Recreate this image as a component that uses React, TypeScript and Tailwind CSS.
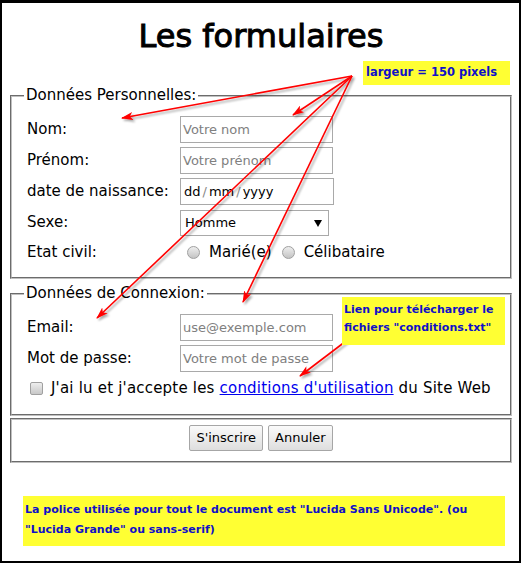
import React from 'react'

const font = "font-['DejaVu_Sans',sans-serif]"
const note = "font-['Comic_Sans_MS','DejaVu_Sans',sans-serif] font-bold text-[#1010c8]"

function TextBox({ placeholder }: { placeholder: string }) {
  return (
    <div className="w-[153px] h-[27px] border border-[#a9a9a9] bg-white px-[2px] flex items-center text-[13px] text-[#808080]">
      {placeholder}
    </div>
  )
}

function Radio() {
  return <span className="inline-block w-[13px] h-[13px] rounded-full border border-[#a0a0a0] bg-gradient-to-b from-[#eeeeee] to-[#c4c4c4]" />
}

function Row({ label, children }: { label: string; children: React.ReactNode }) {
  return (
    <>
      <div className="text-[15px] leading-[19px]">{label}</div>
      <div className="flex items-center">{children}</div>
    </>
  )
}

function Arrows() {
  const o = { x: 352, y: 76 }
  const tips = [
    [122, 118],
    [293, 115],
    [97, 318],
    [243, 302],
  ]
  return (
    <svg className="absolute left-0 top-0 pointer-events-none" width={521} height={563}>
      <defs>
        <marker id="head" markerUnits="userSpaceOnUse" markerWidth={12} markerHeight={8} refX={11} refY={4} orient="auto">
          <path d="M0,0 L12,4 L0,8 L3,4 z" fill="#ff0000" />
        </marker>
        <filter id="shadow" x="-20%" y="-20%" width="140%" height="140%">
          <feDropShadow dx={2} dy={2} stdDeviation={1.2} floodColor="#000" floodOpacity={0.35} />
        </filter>
      </defs>
      <g filter="url(#shadow)" stroke="#ff0000" strokeWidth={1.6} fill="none">
        {tips.map(([x, y], i) => (
          <line key={i} x1={o.x} y1={o.y} x2={x} y2={y} markerEnd="url(#head)" />
        ))}
        <line x1={350} y1={338} x2={300} y2={376} markerEnd="url(#head)" />
      </g>
    </svg>
  )
}

export default function App() {
  return (
    <div className={`relative w-[521px] h-[563px] bg-white text-black ${font}`}>
      <div className="w-[521px] h-[563px] border-2 border-t-[3px] border-black pl-[8px] pr-[7px]">
        <h1 className="mt-[15px] text-center text-[32px] leading-[36px] [-webkit-text-stroke:1px_black]">Les formulaires</h1>

        <fieldset className="mt-[32px] border-2 [border-style:groove] border-[#c0c0c0] pl-[12px] pr-[12px] pt-[11px] pb-[14px]">
          <legend className="px-[2px] text-[15px] leading-[19px]">Données Personnelles:</legend>
          <div className="grid grid-cols-[153px_1fr] gap-y-[4px] items-center pl-[3px]">
            <Row label="Nom:"><TextBox placeholder="Votre nom" /></Row>
            <Row label="Prénom:"><TextBox placeholder="Votre prénom" /></Row>
            <Row label="date de naissance:">
              <div className="w-[154px] h-[27px] border border-[#a9a9a9] px-[3px] flex items-center text-[13px]">
                dd<span className="text-[#888] mx-[2px]">/</span>mm<span className="text-[#888] mx-[2px]">/</span>yyyy
              </div>
            </Row>
            <Row label="Sexe:">
              <div className="mt-[1px] w-[149px] h-[26px] border border-[#a9a9a9] pl-[4px] pr-[6px] flex items-center justify-between text-[13px]">
                <span>Homme</span>
                <svg width={8} height={7} viewBox="0 0 8 7"><path d="M0,0 L8,0 L4,7 z" fill="#000" /></svg>
              </div>
            </Row>
            <div className="mt-[1px] text-[15px] leading-[22px]">Etat civil:</div>
            <div className="mt-[1px] flex items-center text-[15px] leading-[22px] pl-[7px]">
              <Radio />
              <span className="ml-[9px]">Marié(e)</span>
              <span className="ml-[10px] flex"><Radio /></span>
              <span className="ml-[9px]">Célibataire</span>
            </div>
          </div>
        </fieldset>

        <fieldset className="mt-[5px] border-2 [border-style:groove] border-[#c0c0c0] pl-[12px] pr-[12px] pt-[11px] pb-[16px]">
          <legend className="px-[2px] text-[15px] leading-[19px]">Données de Connexion:</legend>
          <div className="grid grid-cols-[153px_1fr] gap-y-[4px] items-center pl-[3px]">
            <Row label="Email:"><TextBox placeholder="use@exemple.com" /></Row>
            <Row label="Mot de passe:"><TextBox placeholder="Votre mot de passe" /></Row>
          </div>
          <div className="mt-[6px] flex items-center text-[15px] leading-[20px] pl-[6px]">
            <span className="inline-block w-[13px] h-[13px] rounded-[2px] border border-[#a0a0a0] bg-gradient-to-b from-[#eeeeee] to-[#c8c8c8]" />
            <span className="ml-[8px] tracking-[0.2px]">
              J'ai lu et j'accepte les <a href="#" className="text-[#0000ee] underline">conditions d'utilisation</a> du Site Web
            </span>
          </div>
        </fieldset>

        <fieldset className="mt-[2px] border-2 [border-style:groove] border-[#c0c0c0] pt-[5px] pb-[10px]">
          <div className="flex justify-center gap-[5px]">
            <button className="h-[26px] px-[6px] border border-[#a6a6a6] rounded-[2px] bg-gradient-to-b from-[#fafafa] to-[#dedede] text-[13px]">S'inscrire</button>
            <button className="h-[26px] px-[6px] border border-[#a6a6a6] rounded-[2px] bg-gradient-to-b from-[#fafafa] to-[#dedede] text-[13px]">Annuler</button>
          </div>
        </fieldset>

        <div className={`mt-[33px] ml-[13px] mr-[7px] h-[50px] bg-[#ffff33] pt-[4px] pl-[2px] text-[11px] leading-[20px] ${note}`}>
          La police utilisée pour tout le document est "Lucida Sans Unicode". (ou<br />"Lucida Grande" ou sans-serif)
        </div>
      </div>

      <Arrows />

      <div className={`absolute left-[363px] top-[61px] w-[147px] h-[24px] bg-[#ffff33] pl-[3px] flex items-center text-[11.5px] ${note}`}>
        largeur = 150 pixels
      </div>
      <div className={`absolute left-[342px] top-[297px] w-[163px] h-[48px] bg-[#ffff33] pl-[2px] pt-[4px] text-[11px] leading-[18px] ${note}`}>
        Lien pour télécharger le<br />fichiers "conditions.txt"
      </div>
    </div>
  )
}
